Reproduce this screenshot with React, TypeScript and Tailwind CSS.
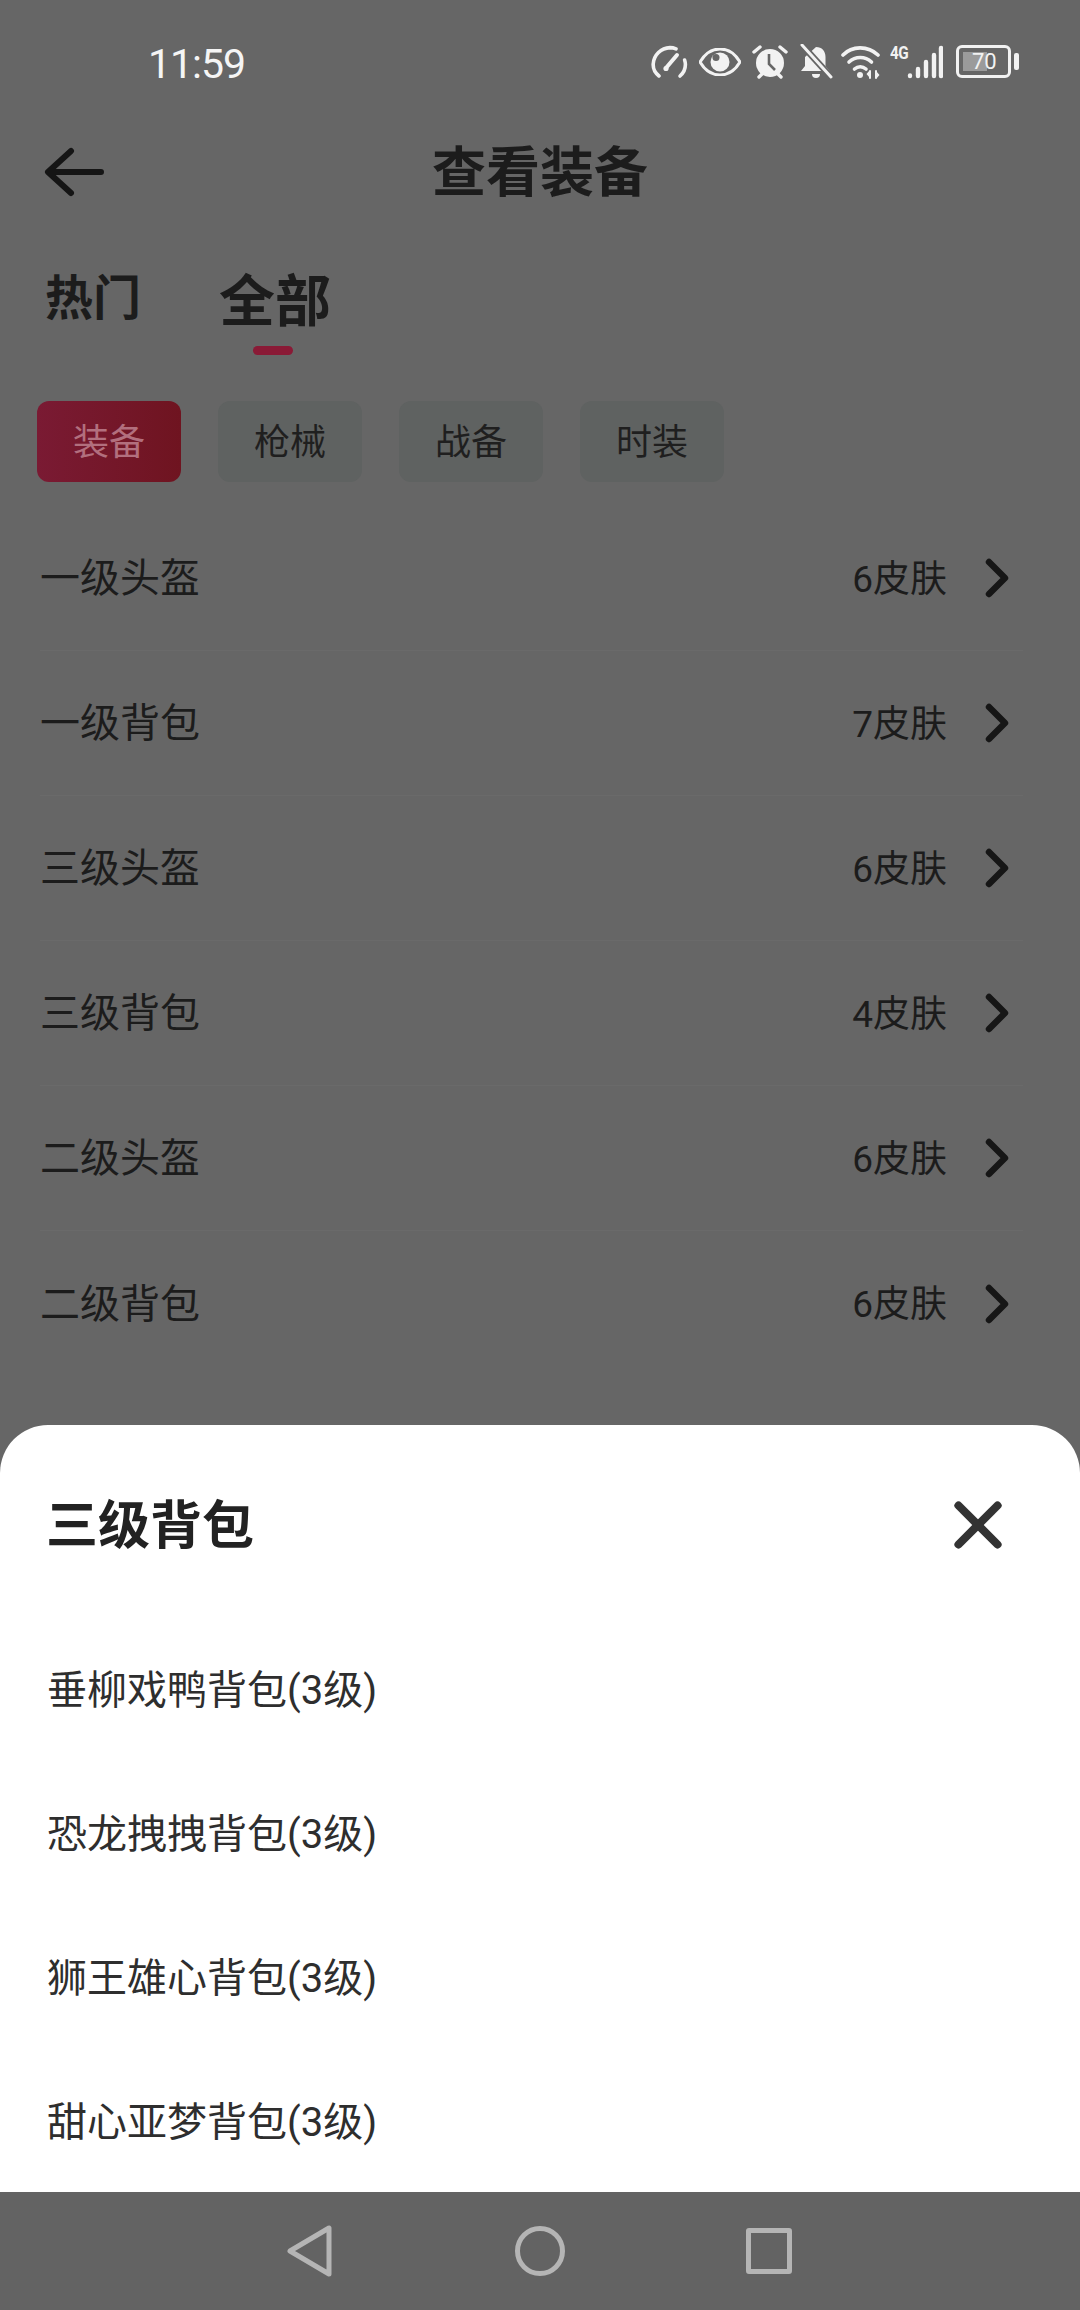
import { ChevronRight, X } from 'lucide-react';

const chips = ['装备', '枪械', '战备', '时装'];

const rows = [
  { name: '一级头盔', count: '6皮肤' },
  { name: '一级背包', count: '7皮肤' },
  { name: '三级头盔', count: '6皮肤' },
  { name: '三级背包', count: '4皮肤' },
  { name: '二级头盔', count: '6皮肤' },
  { name: '二级背包', count: '6皮肤' },
];

const skins = ['垂柳戏鸭背包(3级)', '恐龙拽拽背包(3级)', '狮王雄心背包(3级)', '甜心亚梦背包(3级)'];

function StatusIcons() {
  return (
    <div className="mb-[3px] flex items-center">
      {/* 仪表 */}
      <svg width="37" height="34" viewBox="0 0 37 34" fill="none" stroke="#f2f2f2" strokeWidth="3.6" strokeLinecap="round">
        <path d="M8 31C3.5 27.5 2 23 2.2 19 2.8 10 10 3 19 2.6c2.2 0 4 .4 6 1.2" />
        <path d="M29 31c3.5-3 5.4-7 5.4-11.500 0-1.700-.3-3-.8-4.500" />
        <path d="M15 23l11-13" strokeWidth="4" />
        <circle cx="15" cy="23.500" r="2.600" fill="#f2f2f2" stroke="none" />
      </svg>
      {/* 眼睛 */}
      <svg width="42" height="28" viewBox="0 0 42 28" className="ml-[11px]">
        <path d="M1 14C6 5.500 13 1 21 1s15 4.500 20 13c-5 8.500-12 13-20 13S6 22.500 1 14z" fill="none" stroke="#f2f2f2" strokeWidth="3" />
        <circle cx="21" cy="14" r="9.500" fill="#f2f2f2" />
        <circle cx="17" cy="9.500" r="3.500" fill="#666666" />
      </svg>
      {/* 闹钟 */}
      <svg width="36" height="34" viewBox="0 0 36 34" className="ml-[11px]">
        <circle cx="18" cy="18" r="14" fill="#f2f2f2" />
        <path d="M2 7l6-5M34 7l-6-5M7 32l3-3M29 32l-3-3" stroke="#f2f2f2" strokeWidth="3.400" strokeLinecap="round" fill="none" />
        <path d="M17 9v10l6 6" stroke="#666666" strokeWidth="2.600" fill="none" />
      </svg>
      {/* 静音铃 */}
      <svg width="33" height="35" viewBox="0 0 33 35" className="ml-[12px]">
        <path d="M16 3c6 0 9.500 4 9.500 10v9l4 5H1l4-5v-9" fill="#f2f2f2" />
        <path d="M12 30h8a4 4 0 0 1-8 0z" fill="#f2f2f2" />
        <path d="M2 1l29 32" stroke="#666666" strokeWidth="6.500" />
        <path d="M2 1l29 32" stroke="#f2f2f2" strokeWidth="3" strokeLinecap="round" />
      </svg>
      {/* wifi */}
      <svg width="40" height="34" viewBox="0 0 40 34" fill="none" stroke="#f2f2f2" strokeWidth="3.600" strokeLinecap="round" className="ml-[8px]">
        <path d="M2 10C11 .5 27 .5 37 10" />
        <path d="M8 17c6.500-6 16-6 22.500 0" />
        <path d="M13.500 24c3.500-3 8-3 11.500 0" />
        <circle cx="19" cy="30" r="3" fill="#f2f2f2" stroke="none" />
        <path d="M29 33v-7M35 33v-7" strokeWidth="2" />
        <path d="M25.500 29l3-3.500v7zM38.500 30l-3-3.500v7z" fill="#f2f2f2" stroke="none" />
      </svg>
      {/* 4G + 信号 */}
      <div className="relative ml-[9px] h-[34px] w-[53px]">
        <span className="absolute left-0 top-[-1px] origin-left scale-x-[0.85] text-[18px] font-bold leading-[18px] tracking-[-0.5px] text-[#f2f2f2] [font-family:Roboto,sans-serif]">4G</span>
        <svg width="36" height="34" viewBox="0 0 36 34" fill="none" stroke="#f2f2f2" strokeWidth="4.400" strokeLinecap="round" className="absolute right-0 top-0">
          <path d="M3 31v-.5M11 31v-7M19 31V17M27 31V10M34 31V3" />
        </svg>
      </div>
      {/* 电池 */}
      <div className="ml-[13px] flex items-center gap-[3px]">
        <div className="relative flex h-[33px] w-[55px] items-center rounded-[6px] border-[3px] border-[#f2f2f2] pl-[4px]">
          <div className="h-[19px] w-[24px] bg-[#9b9b9b]" />
          <span className="absolute left-[13px] top-0 text-[22px] leading-[27px] text-[#f2f2f2] [font-family:Roboto,sans-serif]">70</span>
        </div>
        <div className="h-[17px] w-[5px] rounded-[2px] bg-[#f2f2f2]" />
      </div>
    </div>
  );
}

export default function App() {
  return (
    <div className="flex h-[2310px] w-[1080px] flex-col overflow-hidden bg-[#666666] text-[#1c1c1c] [font-family:Roboto,'Noto_Sans_CJK_SC',sans-serif]">
      {/* 状态栏 */}
      <div className="flex h-[126px] shrink-0 items-center justify-between pl-[148px] pr-[61px]">
        <span className="mt-[2px] text-[41px] leading-none tracking-[-1px] text-[#f5f5f5]">11:59</span>
        <StatusIcons />
      </div>

      {/* 标题 */}
      <div className="grid h-[92px] shrink-0 grid-cols-[1fr_auto_1fr] items-center px-[44px]">
        <svg width="60" height="50" viewBox="0 0 60 50" fill="none" stroke="#151515" strokeWidth="6" strokeLinecap="round" strokeLinejoin="round">
          <path d="M57 25H8M27 4L4 25l23 21" />
        </svg>
        <span className="pt-[3px] text-[54px] font-bold leading-none">查看装备</span>
        <span />
      </div>

      {/* 热门 / 全部 */}
      <div className="mt-[40px] flex h-[97px] shrink-0 items-start gap-[78px] pl-[45px]">
        <span className="mt-[13px] text-[48px] font-bold leading-[56px]">热门</span>
        <div className="mt-[13px] flex flex-col items-center">
          <span className="text-[56px] font-bold leading-[62px]">全部</span>
          <span className="ml-[-4px] mt-[13px] h-[9px] w-[40px] rounded-full bg-[#8a1a36]" />
        </div>
      </div>

      {/* 分类 */}
      <div className="mt-[46px] flex shrink-0 gap-[37px] pl-[37px]">
        {chips.map((c, i) => (
          <div
            key={c}
            className={
              i === 0
                ? 'flex h-[81px] w-[144px] items-center justify-center rounded-[12px] bg-gradient-to-r from-[#7a1a33] to-[#6f1420] pt-[3px] text-[36px] text-[#b26f7e]'
                : 'flex h-[81px] w-[144px] items-center justify-center rounded-[12px] bg-[#5f6261] pt-[3px] text-[36px] text-[#1f1f1f]'
            }
          >
            {c}
          </div>
        ))}
      </div>

      {/* 列表 */}
      <div className="mt-[24px] flex flex-col pl-[40px] pr-[57px]">
        {rows.map((r, i) => (
          <div
            key={r.name}
            className={
              i === rows.length - 1
                ? 'flex h-[145px] items-center justify-between pr-[10px]'
                : 'flex h-[145px] items-center justify-between border-b border-[#6a6a6a] pr-[10px]'
            }
          >
            <span className="pt-[2px] text-[40px] leading-none">{r.name}</span>
            <div className="flex items-center">
              <span className="pt-[2px] text-[37px] leading-none">{r.count}</span>
              <ChevronRight size={64} strokeWidth={2.4} className="ml-[18px] mr-[-16px] text-[#161616]" />
            </div>
          </div>
        ))}
      </div>

      {/* 底部弹层 */}
      <div className="mt-auto flex h-[767px] shrink-0 flex-col overflow-hidden rounded-t-[48px] bg-white text-[#2e2e2e]">
        <div className="flex h-[193px] shrink-0 items-center justify-between pl-[46px] pr-[63px] pt-[7px]">
          <span className="pt-[4px] text-[52px] font-bold leading-none text-[#222222]">三级背包</span>
          <X size={78} strokeWidth={2.5} className="text-[#333333]" />
        </div>
        <div className="mt-[-1px] flex flex-col pl-[47px]">
          {skins.map((s) => (
            <div key={s} className="flex h-[144px] shrink-0 items-center pt-[3px] text-[40px] leading-none">
              {s}
            </div>
          ))}
        </div>
      </div>

      {/* 导航栏 */}
      <div className="flex h-[118px] shrink-0 items-center justify-center bg-[#636363] pb-[1px]">
        <svg width="48" height="54" viewBox="0 0 48 54" fill="none" stroke="#b5b5b5" strokeWidth="5" strokeLinejoin="round" className="ml-[-3px]">
          <path d="M44 4v46L5 27z" />
        </svg>
        <div className="ml-[182px] h-[50px] w-[50px] rounded-full border-[5px] border-[#b5b5b5]" />
        <div className="ml-[181px] h-[46px] w-[46px] rounded-[3px] border-[5px] border-[#b5b5b5]" />
      </div>
    </div>
  );
}
